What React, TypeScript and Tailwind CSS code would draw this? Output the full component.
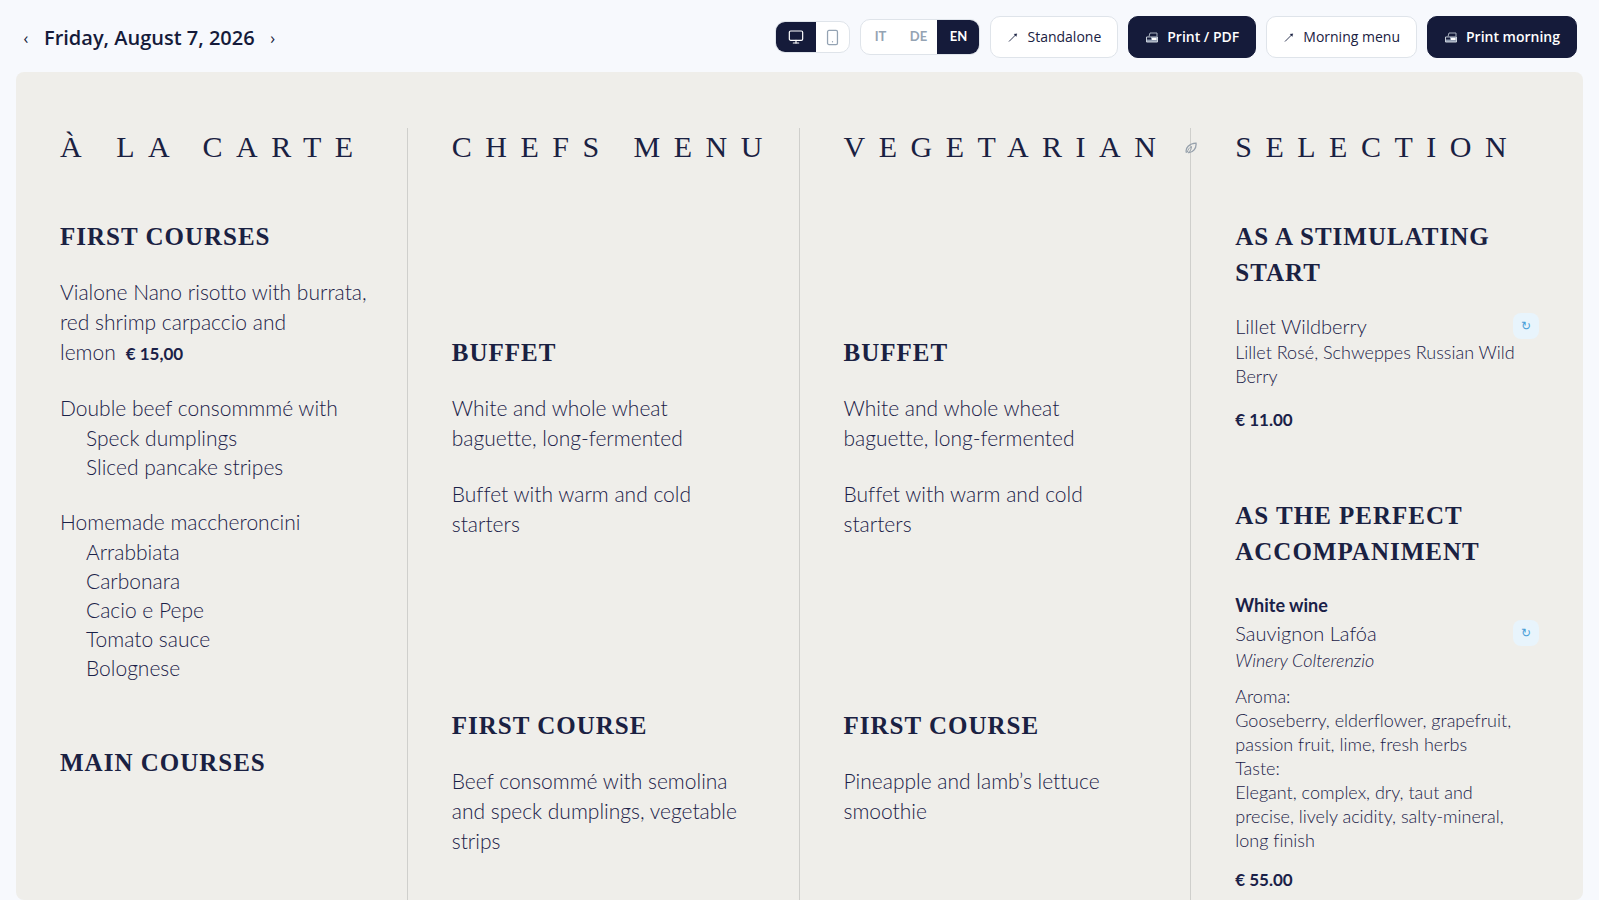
import { Monitor, Smartphone } from "lucide-react";
import type { ReactNode } from "react";

type Dish = { lines: string[]; price?: string; options?: string[] };

const languages = ["IT", "DE", "EN"];

const firstCourses: Dish[] = [
  {
    lines: ["Vialone Nano risotto with burrata,", "red shrimp carpaccio and", "lemon"],
    price: "€ 15,00",
  },
  {
    lines: ["Double beef consommmé with"],
    options: ["Speck dumplings", "Sliced pancake stripes"],
  },
  {
    lines: ["Homemade maccheroncini"],
    options: ["Arrabbiata", "Carbonara", "Cacio e Pepe", "Tomato sauce", "Bolognese"],
  },
];

const buffet: Dish[] = [
  { lines: ["White and whole wheat", "baguette, long-fermented"] },
  { lines: ["Buffet with warm and cold", "starters"] },
];

const chefsFirst: Dish[] = [
  { lines: ["Beef consommé with semolina", "and speck dumplings, vegetable", "strips"] },
];

const vegetarianFirst: Dish[] = [{ lines: ["Pineapple and lamb’s lettuce", "smoothie"] }];

function ArrowIcon() {
  return (
    <svg width="12" height="12" viewBox="0 0 12 12" fill="none" stroke="currentColor" aria-hidden="true">
      <path d="M2 10.5 L9 3.5" strokeWidth="0.9" />
      <path d="M7 3.2 L9.8 2.7 L9.3 5.5 Z" fill="currentColor" strokeWidth="0.3" />
    </svg>
  );
}

function PrinterIcon() {
  return (
    <svg width="14" height="14" viewBox="0 0 14 14" fill="none" aria-hidden="true">
      <path d="M4 6.5 L5 3 H12 V6.5" stroke="#aab2c0" />
      <path d="M1.5 7 H12.5 V12 H1.5 Z" fill="#8f9bb0" stroke="#c9d0da" />
      <path d="M2 7.5 H6 V9.5 H2 Z" fill="#151b3a" />
      <path d="M7 8 H11.5 V10 H7 Z" fill="#ffffff" />
    </svg>
  );
}

function LeafIcon() {
  return (
    <svg width="12" height="12" viewBox="0 0 12 12" fill="none" stroke="#97a1ac" strokeWidth="1.3" aria-hidden="true">
      <path d="M1.5 10.8 C-0.2 6 4.5 1.5 11 1.2 C11.6 6 8 11 3.2 10.5" />
      <path d="M2.2 10.5 C2.8 7.5 4.5 5.5 6.5 4.5 C6.5 7 5.5 9 3.2 10.5" strokeWidth="1" />
    </svg>
  );
}

function ToolbarButton({ dark, icon, children }: { dark?: boolean; icon: ReactNode; children: ReactNode }) {
  return (
    <button
      type="button"
      className={
        dark
          ? "flex h-[42px] items-center gap-2 rounded-[10px] border border-[#151b3a] bg-[#151b3a] px-4 text-sm font-semibold text-white"
          : "flex h-[42px] items-center gap-2 rounded-[10px] border border-[#dfe4ea] bg-white px-4 text-sm font-medium text-[#1a2142]"
      }
    >
      {icon}
      {children}
    </button>
  );
}

function Toolbar() {
  return (
    <header className="flex h-[72px] shrink-0 items-center justify-between pt-0.5 pr-[22px] pl-4 font-['Open_Sans',sans-serif]">
      <div className="flex items-center gap-2 pt-0.5 text-[#151b3a]">
        <button type="button" aria-label="Previous day" className="w-5 text-base">
          ‹
        </button>
        <h1 className="text-xl font-semibold">Friday, August 7, 2026</h1>
        <button type="button" aria-label="Next day" className="w-5 text-base">
          ›
        </button>
      </div>

      <div className="flex items-center gap-[10px]">
        <div className="flex h-8 overflow-hidden rounded-[10px] border border-[#dfe4ea] bg-white">
          <button type="button" aria-label="Desktop view" className="flex w-10 items-center justify-center bg-[#151b3a] text-white">
            <Monitor size={16} strokeWidth={1.8} />
          </button>
          <button type="button" aria-label="Phone view" className="flex w-[33px] items-center justify-center text-[#94a3b3]">
            <Smartphone size={17} strokeWidth={1.8} />
          </button>
        </div>

        <div className="flex h-9 overflow-hidden rounded-[10px] border border-[#dfe4ea] bg-white font-[Lato,sans-serif] text-[13px] font-bold">
          {languages.map((lang) => (
            <button
              key={lang}
              type="button"
              className={lang === "EN" ? "w-[42px] bg-[#151b3a] text-white" : "w-[38px] text-[#94a3b3]"}
            >
              {lang}
            </button>
          ))}
        </div>

        <ToolbarButton icon={<ArrowIcon />}>Standalone</ToolbarButton>
        <ToolbarButton dark icon={<PrinterIcon />}>
          Print / PDF
        </ToolbarButton>
        <ToolbarButton icon={<ArrowIcon />}>Morning menu</ToolbarButton>
        <ToolbarButton dark icon={<PrinterIcon />}>
          Print morning
        </ToolbarButton>
      </div>
    </header>
  );
}

function Column({ title, icon, children }: { title: string; icon?: ReactNode; children: ReactNode }) {
  return (
    <section className="border-r border-[#cfcfcc] px-11 last:border-r-0">
      <h2 className="flex h-9 items-center font-['Liberation_Serif',serif] text-[30px] tracking-[0.45em] whitespace-nowrap text-[#1a2142]">
        {title}
        {icon}
      </h2>
      {children}
    </section>
  );
}

function SectionTitle({ children }: { children: ReactNode }) {
  return (
    <h3 className="mb-[22px] font-['Liberation_Serif',serif] text-[25px] leading-9 font-bold tracking-[1px] text-[#1a2142]">
      {children}
    </h3>
  );
}

function Dishes({ items }: { items: Dish[] }) {
  return (
    <div className="space-y-[26px] text-[21px] leading-[30px] font-light">
      {items.map((dish) => (
        <div key={dish.lines[0]}>
          {dish.lines.map((line, i) => (
            <p key={line} className="whitespace-nowrap">
              {line}
              {dish.price && i === dish.lines.length - 1 && (
                <strong className="ml-[10px] text-[17px] leading-none font-bold">{dish.price}</strong>
              )}
            </p>
          ))}
          {dish.options && (
            <ul className="pl-[26px] leading-[29px]">
              {dish.options.map((option) => (
                <li key={option}>{option}</li>
              ))}
            </ul>
          )}
        </div>
      ))}
    </div>
  );
}

function DrinkName({ name }: { name: string }) {
  return (
    <div className="flex items-center justify-between">
      <span className="text-[20px] leading-[26px]">{name}</span>
      <button
        type="button"
        aria-label={`Replace ${name}`}
        className="h-[26px] w-[26px] rounded-lg bg-[#e8f4fc] text-xs text-[#4a9fd8]"
      >
        ↻
      </button>
    </div>
  );
}

export default function App() {
  return (
    <div className="flex h-screen flex-col overflow-hidden bg-[#f7f9fd] text-[#1a2148]">
      <Toolbar />

      <main className="mx-4 grid min-h-0 flex-1 grid-cols-4 overflow-hidden rounded-lg bg-[#efeeea] pt-14 font-[Lato,sans-serif] [font-variant-ligatures:none]">
        <Column title="À LA CARTE">
          <div className="mt-[55px]">
            <SectionTitle>FIRST COURSES</SectionTitle>
            <Dishes items={firstCourses} />
          </div>
          <div className="mt-[63px]">
            <SectionTitle>MAIN COURSES</SectionTitle>
          </div>
        </Column>

        <Column title="CHEFS MENU">
          <div className="mt-[171px]">
            <SectionTitle>BUFFET</SectionTitle>
            <Dishes items={buffet} />
          </div>
          <div className="mt-[169px]">
            <SectionTitle>FIRST COURSE</SectionTitle>
            <Dishes items={chefsFirst} />
          </div>
        </Column>

        <Column
          title="VEGETARIAN"
          icon={
            <span className="ml-4 shrink-0 pt-1 tracking-normal">
              <LeafIcon />
            </span>
          }
        >
          <div className="mt-[171px]">
            <SectionTitle>BUFFET</SectionTitle>
            <Dishes items={buffet} />
          </div>
          <div className="mt-[169px]">
            <SectionTitle>FIRST COURSE</SectionTitle>
            <Dishes items={vegetarianFirst} />
          </div>
        </Column>

        <Column title="SELECTION">
          <div className="mt-[55px] font-light">
            <SectionTitle>
              AS A STIMULATING
              <br />
              START
            </SectionTitle>
            <DrinkName name="Lillet Wildberry" />
            <p className="mt-px text-[18px] leading-6 whitespace-nowrap">
              Lillet Rosé, Schweppes Russian Wild
              <br />
              Berry
            </p>
            <p className="mt-5 text-[17px] leading-6 font-bold">€ 11.00</p>
          </div>

          <div className="mt-[66px] font-light">
            <SectionTitle>
              AS THE PERFECT
              <br />
              ACCOMPANIMENT
            </SectionTitle>
            <p className="mb-0.5 text-[18px] leading-[26px] font-bold">White wine</p>
            <DrinkName name="Sauvignon Lafóa" />
            <p className="mt-0.5 text-[18px] leading-6 italic">Winery Colterenzio</p>
            <div className="mt-3 text-[18px] leading-6 whitespace-nowrap">
              <p>Aroma:</p>
              <p>
                Gooseberry, elderflower, grapefruit,
                <br />
                passion fruit, lime, fresh herbs
              </p>
              <p>Taste:</p>
              <p>
                Elegant, complex, dry, taut and
                <br />
                precise, lively acidity, salty-mineral,
                <br />
                long finish
              </p>
            </div>
            <p className="mt-4 text-[17px] leading-6 font-bold">€ 55.00</p>
          </div>
        </Column>
      </main>
    </div>
  );
}
